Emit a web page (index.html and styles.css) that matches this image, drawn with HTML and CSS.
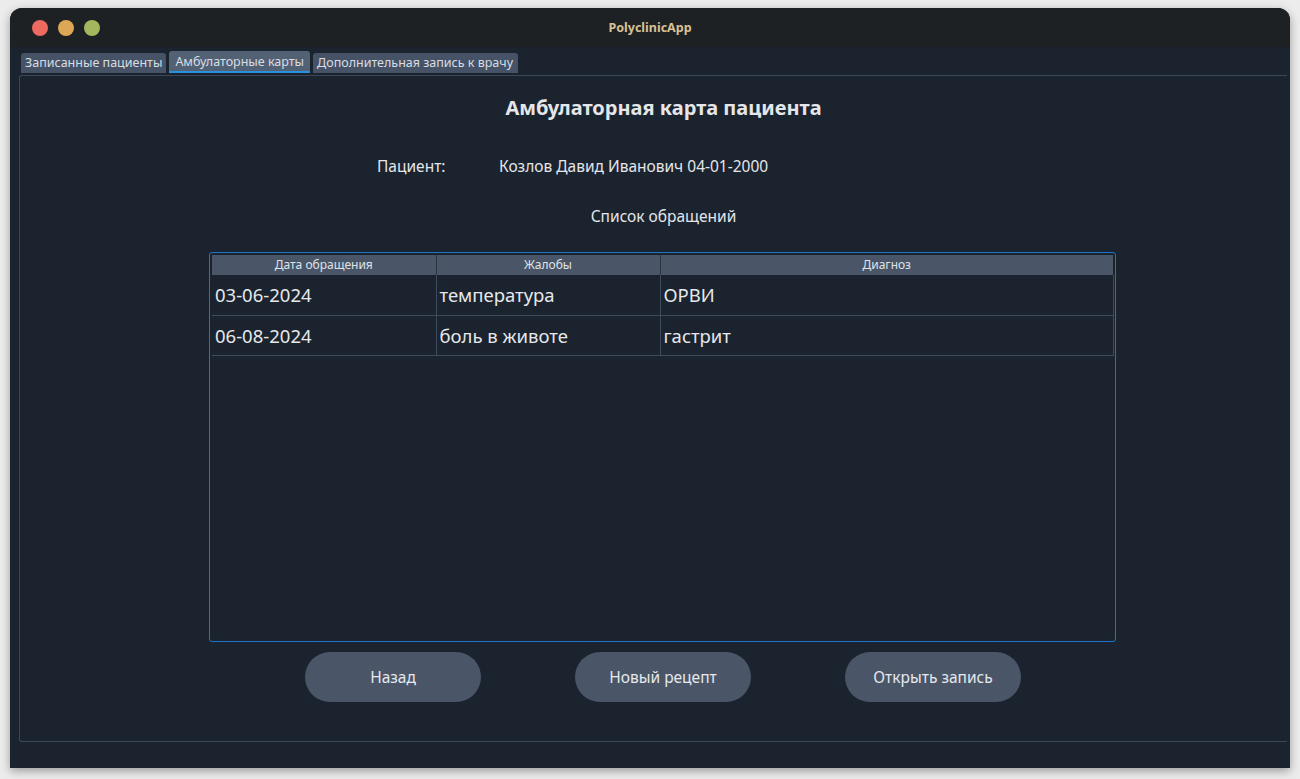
FILE: index.html
```html
<!DOCTYPE html>
<html lang="ru">
<head>
<meta charset="utf-8">
<title>PolyclinicApp</title>
<link rel="stylesheet" href="styles.css">
</head>
<body>
<div class="window">
  <div class="titlebar">
    <div class="lights">
      <span class="light red"></span>
      <span class="light orange"></span>
      <span class="light green"></span>
    </div>
    <div class="title">PolyclinicApp</div>
  </div>
  <div class="content">
    <div class="tabs">
      <div class="tab">Записанные пациенты</div>
      <div class="tab active">Амбулаторные карты</div>
      <div class="tab">Дополнительная запись к врачу</div>
    </div>
    <div class="pane">
      <div class="inner">
        <h1 class="heading">Амбулаторная карта пациента</h1>
        <div class="patient">
          <span class="label">Пациент:</span>
          <span class="value">Козлов Давид Иванович 04-01-2000</span>
        </div>
        <div class="subheading">Список обращений</div>
        <div class="tableframe">
          <table class="grid">
            <colgroup>
              <col class="c1"><col class="c2"><col class="c3">
            </colgroup>
            <thead>
              <tr><th>Дата обращения</th><th>Жалобы</th><th>Диагноз</th></tr>
            </thead>
            <tbody>
              <tr><td>03-06-2024</td><td>температура</td><td>ОРВИ</td></tr>
              <tr><td>06-08-2024</td><td>боль в животе</td><td>гастрит</td></tr>
            </tbody>
          </table>
        </div>
        <div class="buttons">
          <button class="btn">Назад</button>
          <button class="btn">Новый рецепт</button>
          <button class="btn">Открыть запись</button>
        </div>
      </div>
    </div>
  </div>
</div>
</body>
</html>
```
FILE: styles.css
```css
* { box-sizing: border-box; }
html, body { margin: 0; padding: 0; }
body {
  background: #ececec;
  font-family: "Noto Sans", "Open Sans", sans-serif;
  width: 1300px;
  height: 779px;
  overflow: hidden;
}
.window {
  margin: 8px 10px 0 10px;
  width: 1280px;
  height: 760px;
  border-radius: 12px 12px 0 0;
  overflow: hidden;
  background: #1b232e;
  box-shadow: 0 3px 10px rgba(0,0,0,0.35);
}
.titlebar {
  height: 39px;
  background: #1e2124;
  display: flex;
  align-items: center;
  position: relative;
}
.lights {
  display: flex;
  gap: 10px;
  padding-left: 22px;
}
.light {
  width: 16px;
  height: 16px;
  border-radius: 50%;
  display: block;
}
.red { background: #ec6a5f; }
.orange { background: #dda855; }
.green { background: #a4b75f; }
.title {
  position: absolute;
  left: 0;
  right: 0;
  top: 0;
  line-height: 40px;
  text-align: center;
  color: #d7c096;
  font-weight: 700;
  font-size: 12.5px;
}
.content {
  padding: 4px 3px 0 9px;
}
.tabs {
  display: flex;
  align-items: flex-end;
  gap: 3px;
  padding-left: 2px;
  height: 22px;
}
.tab {
  height: 20px;
  background: #465366;
  color: #d8dde4;
  font-size: 12.5px;
  line-height: 20px;
  padding: 0 4px;
  border-radius: 3px 3px 0 0;
  white-space: nowrap;
}
.tab:last-child { padding: 0 5px 0 4px; }
.tab.active {
  height: 22px;
  background: #536174;
  line-height: 21px;
  padding: 0 6px;
  border-bottom: 2px solid #2a90e0;
}
.pane {
  margin-top: 2px;
  height: 667px;
  border-top: 1px solid #3b4759;
  border-left: 1px solid #3b4759;
  border-bottom: 1px solid #3b4759;
  border-top-left-radius: 3px;
  border-bottom-left-radius: 3px;
}
.inner {
  padding: 18px 0 0 20px;
  color: #e4e6ea;
}
.heading {
  margin: 0;
  text-align: center;
  font-size: 20px;
  font-weight: 700;
  line-height: 28px;
  color: #e4e6ea;
}
.patient {
  margin-top: 34px;
  margin-left: 337px;
  display: flex;
  font-size: 15.5px;
  line-height: 20px;
}
.label { width: 122px; }
.subheading {
  margin-top: 30px;
  text-align: center;
  font-size: 15.5px;
  line-height: 20px;
}
.tableframe {
  margin: 26px 0 0 169px;
  width: 907px;
  height: 390px;
  border: 1px solid #1e74c8;
  border-radius: 3px;
  padding: 2px;
}
.grid {
  border-collapse: collapse;
  width: 901px;
  table-layout: fixed;
}
.c1 { width: 224px; }
.c2 { width: 224px; }
.c3 { width: 453px; }
.grid th {
  height: 20px;
  background: #4a5668;
  color: #dfe3e8;
  font-weight: 400;
  font-size: 12px;
  padding: 0;
  border-right: 1px solid #2a3340;
  line-height: 20px;
}
.grid th:last-child { border-right: none; }
.grid td {
  height: 40px;
  padding: 0 0 0 3px;
  font-size: 18.5px;
  color: #e6e8eb;
  border-bottom: 1px solid #3f4b5d;
  border-right: 1px solid #3f4b5d;
}
.buttons {
  margin: 10px 0 0 265px;
  display: flex;
  gap: 94px;
}
.btn {
  width: 176px;
  height: 50px;
  border: none;
  border-radius: 25px;
  background: #4a5668;
  color: #e6e8eb;
  font-family: "Noto Sans", "Open Sans", sans-serif;
  font-size: 15.5px;
  padding: 0;
}
```
